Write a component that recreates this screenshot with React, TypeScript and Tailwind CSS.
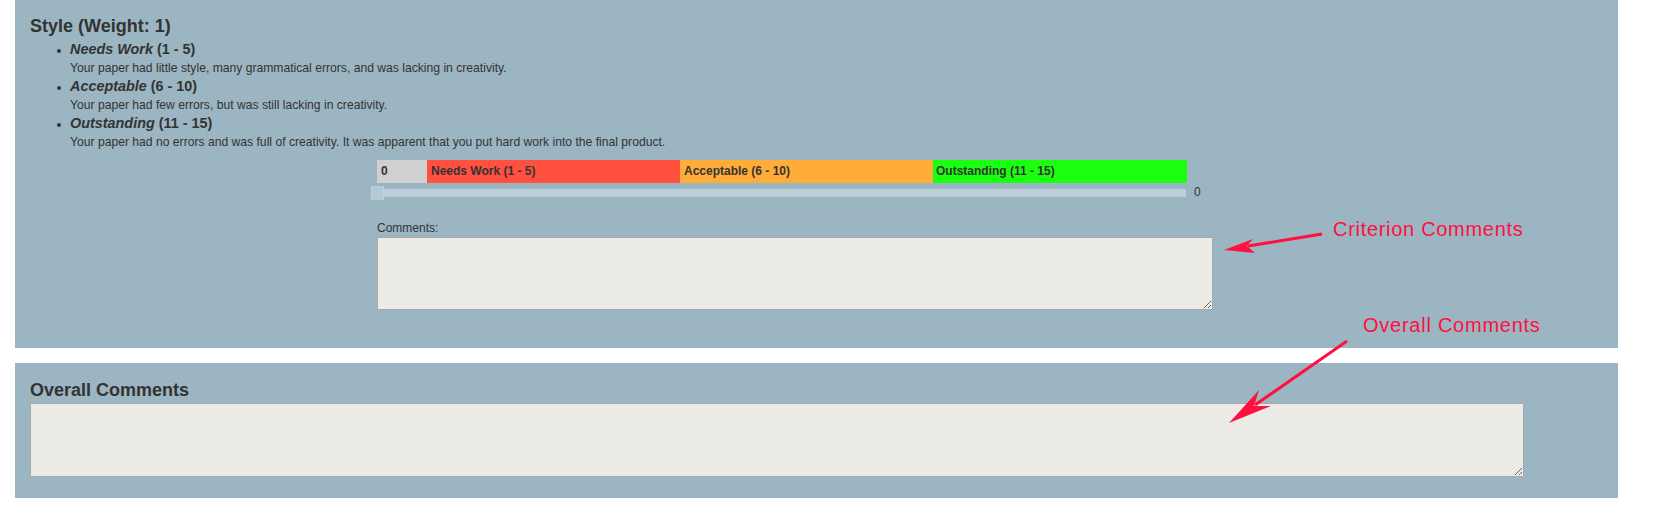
import React from 'react';

const levels = [
  { name: 'Needs Work', range: '(1 - 5)', text: 'Your paper had little style, many grammatical errors, and was lacking in creativity.' },
  { name: 'Acceptable', range: '(6 - 10)', text: 'Your paper had few errors, but was still lacking in creativity.' },
  { name: 'Outstanding', range: '(11 - 15)', text: 'Your paper had no errors and was full of creativity. It was apparent that you put hard work into the final product.' },
];

function ScoreBar() {
  return (
    <div className="ml-[347px] flex h-[23px] w-[810px] text-[12px] font-bold leading-[23px] text-[#333]">
      <div className="w-[50px] bg-[#d0d0d0] pl-[4px]">0</div>
      <div className="w-[253px] bg-[#ff5040] pl-[4px]">Needs Work (1 - 5)</div>
      <div className="w-[253px] bg-[#ffad38] pl-[4px]">Acceptable (6 - 10)</div>
      <div className="w-[254px] bg-[#1aff0f] pl-[3px]">Outstanding (11 - 15)</div>
    </div>
  );
}

function Slider() {
  return (
    <div className="mt-[3px] flex h-[13px] items-center">
      <div className="relative ml-[347px] h-[8px] w-[809px] bg-[#bdd0d9]">
        <div className="absolute -left-[6px] top-1/2 h-[13px] w-[13px] -translate-y-1/2 border border-[#c3d4dc] bg-[#b3c8d2]" />
      </div>
      <span className="ml-[8px] text-[12px] leading-[13px] text-[#333]">0</span>
    </div>
  );
}

export default function App() {
  return (
    <div className="relative min-h-[514px] w-[1657px] bg-white font-['Liberation_Sans',Arial,sans-serif] text-[#333]">
      <section className="ml-[15px] w-[1603px] bg-[#9bb5c2] pb-[38px] pl-[15px] pt-[15px]">
        <h3 className="text-[18px] font-bold leading-[22px]">Style (Weight: 1)</h3>
        <ul className="mt-[3px]">
          {levels.map((l) => (
            <li key={l.name} className="relative pl-[40px]">
              <span className="absolute left-[27px] top-[9px] h-[4px] w-[4px] rounded-full bg-[#333]" />
              <div className="text-[14.4px] font-bold leading-[19px]">
                <em>{l.name}</em> {l.range}
              </div>
              <div className="text-[12.15px] leading-[18px]">{l.text}</div>
            </li>
          ))}
        </ul>
        <div className="mt-[9px]">
          <ScoreBar />
          <Slider />
        </div>
        <div className="ml-[347px] mt-[21px]">
          <label className="block text-[12px] leading-[16px]">Comments:</label>
          <textarea className="mt-[1px] block h-[73px] w-[836px] border border-[#a8a8a8] bg-[#ebeae4]" />
        </div>
      </section>

      <section className="ml-[15px] mt-[15px] w-[1603px] bg-[#9bb5c2] pb-[21px] pl-[15px] pt-[16px]">
        <h3 className="text-[18px] font-bold leading-[22px]">Overall Comments</h3>
        <textarea className="mt-[2px] block h-[74px] w-[1494px] border border-[#a8a8a8] bg-[#ebeae4]" />
      </section>

      {/* annotation overlay */}
      <span className="absolute left-[1333px] top-[219px] text-[20px] leading-[20px] tracking-[0.7px] text-[#ff1040]">
        Criterion Comments
      </span>
      <span className="absolute left-[1363px] top-[315px] text-[20px] leading-[20px] tracking-[0.75px] text-[#ff1040]">
        Overall Comments
      </span>
      <svg className="pointer-events-none absolute left-0 top-0" width="1657" height="514" viewBox="0 0 1657 514">
        <line x1="1322" y1="234" x2="1248" y2="246" stroke="#ff1040" strokeWidth="3" />
        <polygon points="1224,250 1253,239 1247,246 1255,253" fill="#ff1040" />
        <line x1="1347" y1="341" x2="1255" y2="405" stroke="#ff1040" strokeWidth="3" />
        <polygon points="1229,423 1259,390 1254,406 1271,406" fill="#ff1040" />
      </svg>
    </div>
  );
}
